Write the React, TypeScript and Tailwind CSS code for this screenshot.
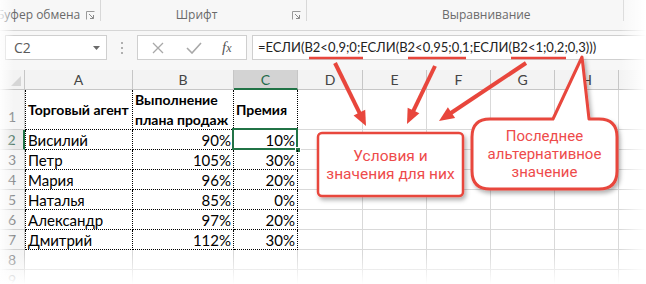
import React from 'react'

const sheetFont = "font-['Lato','Noto_Sans',sans-serif]"
const uiFont = "font-['Open_Sans','Noto_Sans',sans-serif]"
const noteFont = "font-['Roboto','Open_Sans',sans-serif]"

const people = [
  ['Висилий', '90%', '10%'],
  ['Петр', '105%', '30%'],
  ['Мария', '96%', '20%'],
  ['Наталья', '85%', '0%'],
  ['Александр', '97%', '20%'],
  ['Дмитрий', '112%', '30%'],
]

const restCols = ['w-[65px]', 'w-[64px]', 'w-[64px]', 'w-[64px]', 'w-[64px]', 'w-[64px]']
const red = '#e8463c'

function Launcher() {
  return (
    <svg width="9" height="9" viewBox="0 0 9 9" className="shrink-0">
      <path d="M0.5 0.5 H8.5 M0.5 0.5 V8.5" stroke="#9a9a9a" fill="none" />
      <path d="M3 3 L7.5 7.5 M7.5 4 V7.5 H4" stroke="#8a8a8a" fill="none" />
    </svg>
  )
}

function Arrow({ x1, y1, x2, y2 }: { x1: number; y1: number; x2: number; y2: number }) {
  const dx = x2 - x1
  const dy = y2 - y1
  const len = Math.hypot(dx, dy)
  const ux = dx / len
  const uy = dy / len
  const head = 15
  const half = 6.5
  const bx = x2 - ux * head
  const by = y2 - uy * head
  const pts = `${x2},${y2} ${bx - uy * half},${by + ux * half} ${bx + uy * half},${by - ux * half}`
  return (
    <g>
      <line x1={x1} y1={y1} x2={bx + ux * 2} y2={by + uy * 2} stroke={red} strokeWidth={4} />
      <polygon points={pts} fill={red} />
    </g>
  )
}

function EmptyCells() {
  return (
    <>
      {restCols.map((w, i) => (
        <div key={i} className={`${w} shrink-0 border-r border-b border-[#d9d9d9]`} />
      ))}
    </>
  )
}

export default function App() {
  return (
    <div className={`relative h-[284px] w-[646px] overflow-hidden bg-white ${sheetFont}`}>
      {/* ribbon group labels */}
      <div className={`flex h-[31px] border-b border-[#d6d6d6] bg-[#f7f7f7] text-[12px] text-[#6a6a6a] ${uiFont}`}>
        <div className="flex w-[100px] shrink-0 items-center">
          <span className="ml-[-3px] flex-1 whitespace-nowrap">Буфер обмена</span>
          <span className="mr-[5px]"><Launcher /></span>
        </div>
        <div className="h-[21px] w-px shrink-0 bg-[#d8d8d8]" />
        <div className="flex w-[205px] shrink-0 items-center">
          <span className="flex-1 text-center">Шрифт</span>
          <span className="mr-[5px]"><Launcher /></span>
        </div>
        <div className="h-[21px] w-px shrink-0 bg-[#d8d8d8]" />
        <div className="flex w-[316px] shrink-0 items-center pl-[135px]">
          <span className="whitespace-nowrap">Выравнивание</span>
        </div>
        <div className="h-[21px] w-px shrink-0 bg-[#d8d8d8]" />
      </div>

      {/* formula bar */}
      <div className={`flex h-[39px] items-start bg-[#f7f7f7] pt-[4px] ${uiFont}`}>
        <div className="ml-[5px] flex h-[25px] w-[102px] shrink-0 items-center justify-between border border-[#cfcfcf] bg-white pl-[8px] pr-[6px] text-[14px] text-[#5a5a5a]">
          <span>C2</span>
          <svg width="7" height="4" viewBox="0 0 7 4"><path d="M0 0 H7 L3.5 4 Z" fill="#6a6a6a" /></svg>
        </div>
        <div className="flex h-[25px] w-[30px] shrink-0 flex-col items-center justify-center gap-[3px]">
          <span className="h-[2px] w-[2px] bg-[#b0b0b0]" />
          <span className="h-[2px] w-[2px] bg-[#b0b0b0]" />
          <span className="h-[2px] w-[2px] bg-[#b0b0b0]" />
        </div>
        <div className="flex h-[25px] w-[110px] shrink-0 items-center border border-[#cfcfcf] bg-white">
          <svg width="12" height="12" viewBox="0 0 12 12" className="ml-[14px]">
            <path d="M1 1 L11 11 M11 1 L1 11" stroke="#a8a8a8" strokeWidth="1.3" />
          </svg>
          <svg width="16" height="12" viewBox="0 0 16 12" className="ml-[22px]">
            <path d="M1 6 L6 11 L15 1" stroke="#a8a8a8" strokeWidth="1.6" fill="none" />
          </svg>
          <span className="ml-[20px] font-['Liberation_Serif',serif] text-[15px] italic text-[#555]">
            f<span className="text-[12px]">x</span>
          </span>
        </div>
        <div className={`ml-[5px] flex h-[25px] flex-1 items-center border border-[#cfcfcf] bg-white pl-[5px] text-[13px] text-[#222] ${sheetFont}`}>
          <span className="whitespace-nowrap">=ЕСЛИ(B2&lt;0,9;0;ЕСЛИ(B2&lt;0,95;0,1;ЕСЛИ(B2&lt;1;0,2;0,3)))</span>
        </div>
      </div>

      {/* column headers */}
      <div className="flex h-[20px] text-[14px] text-[#444]">
        <div className="relative w-[25px] shrink-0 border-r border-b border-[#c6c6c6] bg-[#f3f3f3]">
          <svg width="10" height="10" viewBox="0 0 10 10" className="absolute right-[3px] bottom-[3px]">
            <path d="M10 0 V10 H0 Z" fill="#d6d6d6" />
          </svg>
        </div>
        <div className="flex w-[108px] shrink-0 items-center justify-center border-r border-b border-[#c6c6c6] bg-[#f3f3f3]">A</div>
        <div className="flex w-[101px] shrink-0 items-center justify-center border-r border-b border-[#c6c6c6] bg-[#f3f3f3]">B</div>
        <div className="flex w-[64px] shrink-0 items-center justify-center border-r border-b-2 border-r-[#c6c6c6] border-b-[#217346] bg-[#d3d3d3] text-[#1e6b4a]">C</div>
        {['D', 'E', 'F', 'G', 'H', 'I'].map((l, i) => (
          <div key={l} className={`flex ${restCols[i]} shrink-0 items-center justify-center border-r border-b border-[#c6c6c6] bg-[#f3f3f3]`}>{l}</div>
        ))}
      </div>

      {/* row 1 */}
      <div className="flex h-[40px] text-[14px] text-black">
        <div className="flex w-[25px] shrink-0 items-end justify-center border-r border-b border-[#d0d0d0] bg-[#f5f5f5] pb-[2px] text-[14px] text-[#8a8a8a]">1</div>
        <div className="flex w-[108px] shrink-0 items-center whitespace-nowrap border-l border-r border-b border-dotted border-black pl-[2px] font-bold">Торговый агент</div>
        <div className="flex w-[101px] shrink-0 flex-col justify-center whitespace-nowrap border-r border-b border-dotted border-black pl-[2px] font-bold leading-[20px]">
          <span>Выполнение</span>
          <span>плана продаж</span>
        </div>
        <div className="flex w-[64px] shrink-0 items-center border-r border-b border-dotted border-black pl-[2px] font-bold">Премия</div>
        <EmptyCells />
      </div>

      {/* rows 2-7 */}
      {people.map(([name, plan, bonus], i) => (
        <div key={name} className="flex h-[20px] text-[15px] leading-[20px] text-black">
          <div
            className={
              i === 0
                ? 'flex w-[25px] shrink-0 items-center justify-center border-r-2 border-b border-r-[#217346] border-b-[#d0d0d0] bg-[#e9e9e9] text-[14px] text-[#557a66]'
                : 'flex w-[25px] shrink-0 items-center justify-center border-r border-b border-[#d0d0d0] bg-[#f5f5f5] text-[14px] text-[#8a8a8a]'
            }
          >
            {i + 2}
          </div>
          <div className="w-[108px] shrink-0 border-l border-r border-b border-dotted border-black pl-[2px]">{name}</div>
          <div className="w-[101px] shrink-0 border-r border-b border-dotted border-black pr-[2px] text-right">{plan}</div>
          <div className="relative w-[64px] shrink-0 border-r border-b border-dotted border-black pr-[2px] text-right">
            {bonus}
            {i === 0 && (
              <>
                <div className="absolute top-[-2px] left-[-2px] h-[22px] w-[66px] border-2 border-[#217346]" />
                <div className="absolute right-[-4px] bottom-[-4px] h-[6px] w-[6px] border border-white bg-[#217346]" />
              </>
            )}
          </div>
          <EmptyCells />
        </div>
      ))}

      {/* rows 8-9 */}
      {[8, 9].map((n) => (
        <div key={n} className="flex h-[20px]">
          <div className="flex w-[25px] shrink-0 items-center justify-center border-r border-b border-[#d0d0d0] bg-[#f5f5f5] text-[14px] text-[#8a8a8a]">{n}</div>
          <div className="w-[108px] shrink-0 border-r border-b border-[#d9d9d9]" />
          <div className="w-[101px] shrink-0 border-r border-b border-[#d9d9d9]" />
          <div className="w-[64px] shrink-0 border-r border-b border-[#d9d9d9]" />
          <EmptyCells />
        </div>
      ))}

      {/* annotation drawing */}
      <svg className="pointer-events-none absolute top-0 left-0" width="646" height="284" viewBox="0 0 646 284">
        <defs>
          <filter id="sh" x="-20%" y="-20%" width="140%" height="150%">
            <feDropShadow dx="2" dy="3" stdDeviation="2" floodColor="#000" floodOpacity="0.3" />
          </filter>
        </defs>
        <g stroke={red} strokeWidth="2.5">
          <line x1="309" y1="58" x2="363" y2="58" />
          <line x1="408" y1="58" x2="466" y2="58" />
          <line x1="511" y1="58" x2="566" y2="58" />
        </g>
        <Arrow x1={335} y1={63} x2={366} y2={126} />
        <Arrow x1={435} y1={66} x2={407} y2={124} />
        <Arrow x1={526} y1={63} x2={439} y2={121} />
        <rect x="318" y="133" width="145" height="63" rx="4" fill="#fff" stroke={red} strokeWidth="2.5" filter="url(#sh)" />
        <path
          d="M490 119 L553 119 L582 57 L589 119 L599 119 Q617 119 617 137 L617 171 Q617 189 599 189 L490 189 Q472 189 472 171 L472 137 Q472 119 490 119 Z"
          fill="#fff"
          stroke={red}
          strokeWidth="3"
          strokeLinejoin="round"
          filter="url(#sh)"
        />
      </svg>

      {/* callout texts */}
      <div className={`absolute top-[133px] left-[318px] flex h-[63px] w-[145px] flex-col items-center justify-center text-[15.5px] leading-[18px] text-[#ee4b4b] ${noteFont}`}>
        <span>Условия и</span>
        <span>значения для них</span>
      </div>
      <div className={`absolute top-[119px] left-[472px] flex h-[70px] w-[145px] flex-col items-center justify-center text-[15px] leading-[18px] text-[#ee4b4b] ${noteFont}`}>
        <span>Последнее</span>
        <span>альтернативное</span>
        <span>значение</span>
      </div>

      {/* faded edges */}
      <div className="pointer-events-none absolute top-0 left-0 h-full w-[14px] bg-linear-to-r from-white/90 to-transparent" />
      <div className="pointer-events-none absolute top-0 right-0 h-full w-[26px] bg-linear-to-r from-transparent to-white" />
      <div className="pointer-events-none absolute bottom-0 left-0 h-[30px] w-full bg-linear-to-b from-transparent to-white" />
    </div>
  )
}
